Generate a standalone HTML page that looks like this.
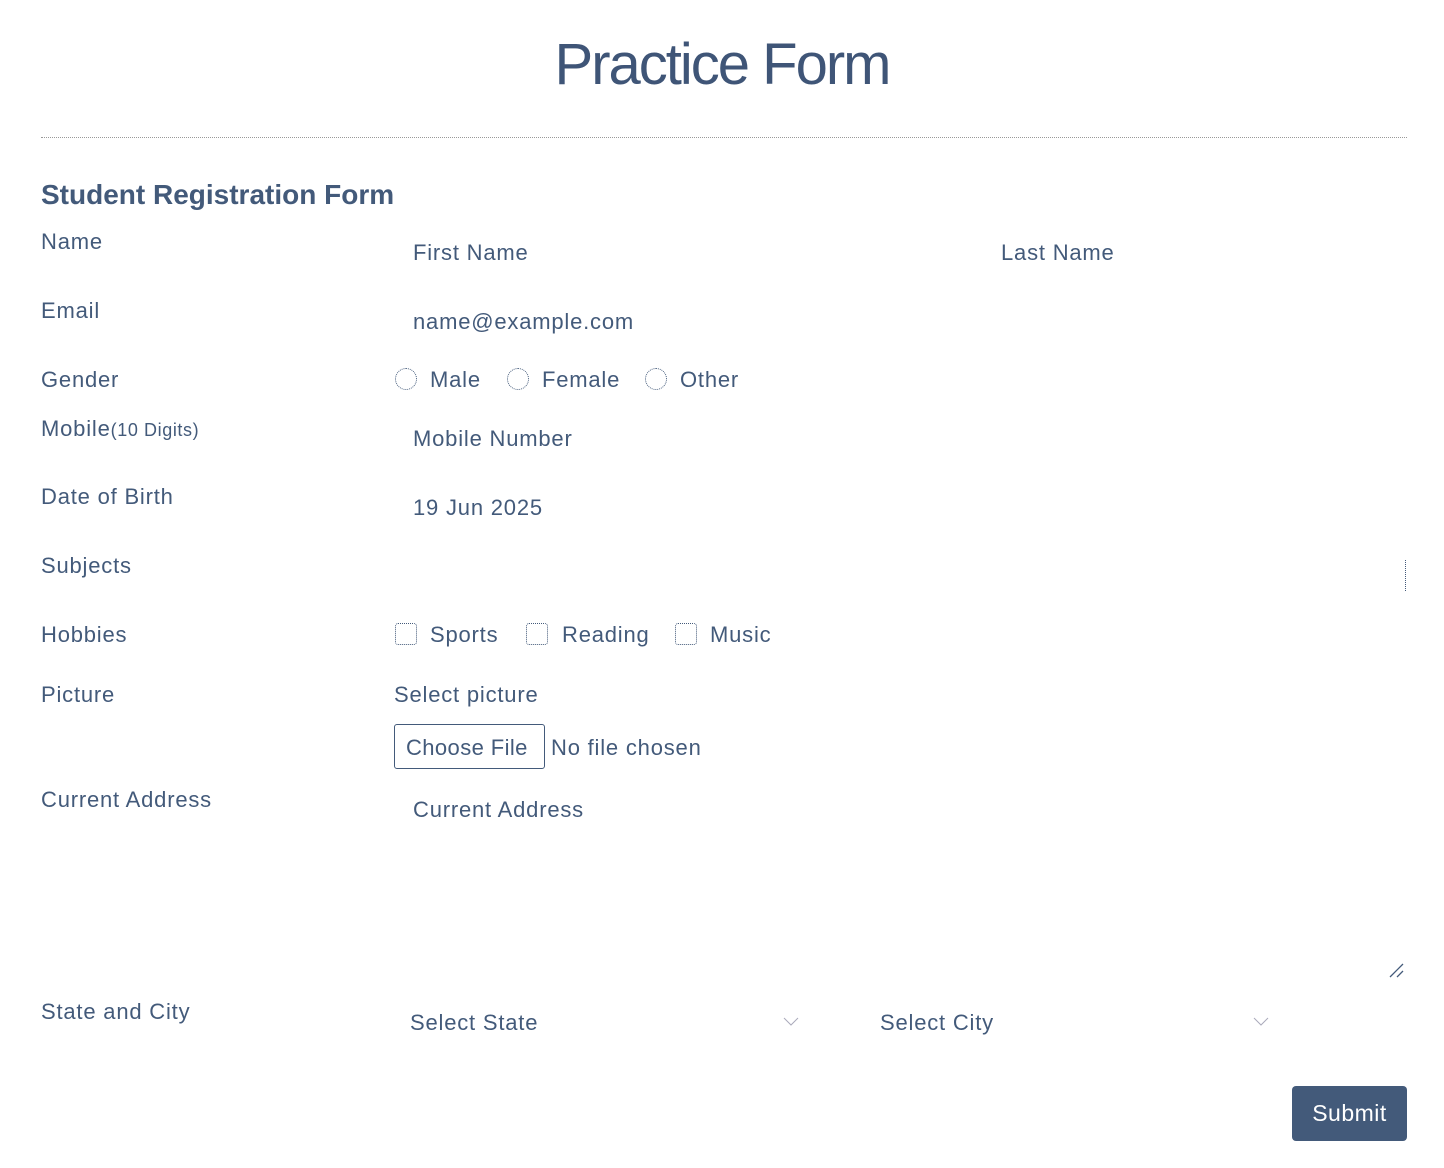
<!DOCTYPE html>
<html><head><meta charset="utf-8"><style>
body{margin:0;width:1444px;height:1168px;background:#fff;font-family:"Liberation Sans",Arial,sans-serif;color:#435a7a;position:relative;overflow:hidden}
.a{position:absolute;white-space:nowrap;font-size:22px;line-height:26px;letter-spacing:0.8px}
.rad{position:absolute;width:22px;height:22px;border:1px dotted #435a7a;border-radius:50%;box-sizing:border-box}
.chk{position:absolute;width:22px;height:22px;border:1px dotted #435a7a;border-radius:3px;box-sizing:border-box}
</style></head><body>
<div class="a" style="left:0;width:1444px;text-align:center;top:30px;font-size:58px;line-height:70px;font-weight:300;letter-spacing:-2px;color:#3f5577">Practice Form</div>
<div style="position:absolute;left:41px;width:1366px;top:137px;border-top:1px dotted #999"></div>
<div class="a" style="left:41px;top:180px;font-size:28px;line-height:30px;font-weight:bold;letter-spacing:0px">Student Registration Form</div>

<div class="a" style="left:41px;top:229px">Name</div>
<div class="a" style="left:413px;top:240px">First Name</div>
<div class="a" style="left:1001px;top:240px">Last Name</div>

<div class="a" style="left:41px;top:298px">Email</div>
<div class="a" style="left:413px;top:309px">name@example.com</div>

<div class="a" style="left:41px;top:367px">Gender</div>
<div class="rad" style="left:395px;top:368px"></div><div class="a" style="left:430px;top:367px">Male</div>
<div class="rad" style="left:507px;top:368px"></div><div class="a" style="left:542px;top:367px">Female</div>
<div class="rad" style="left:645px;top:368px"></div><div class="a" style="left:680px;top:367px">Other</div>

<div class="a" style="left:41px;top:416px">Mobile<span style="font-size:18px;letter-spacing:0.6px">(10 Digits)</span></div>
<div class="a" style="left:413px;top:426px">Mobile Number</div>

<div class="a" style="left:41px;top:484px">Date of Birth</div>
<div class="a" style="left:413px;top:495px">19 Jun 2025</div>

<div class="a" style="left:41px;top:553px">Subjects</div>
<div style="position:absolute;left:1405px;top:560px;height:31px;border-left:1px dotted #435a7a"></div>

<div class="a" style="left:41px;top:622px">Hobbies</div>
<div class="chk" style="left:395px;top:623px"></div><div class="a" style="left:430px;top:622px">Sports</div>
<div class="chk" style="left:526px;top:623px"></div><div class="a" style="left:562px;top:622px">Reading</div>
<div class="chk" style="left:675px;top:623px"></div><div class="a" style="left:710px;top:622px">Music</div>

<div class="a" style="left:41px;top:682px">Picture</div>
<div class="a" style="left:394px;top:682px">Select picture</div>
<div style="position:absolute;left:394px;top:724px;width:151px;height:45px;box-sizing:border-box;border:1px solid #435a7a;border-radius:3px"></div>
<div class="a" style="left:406px;top:735px;letter-spacing:0.4px">Choose File</div>
<div class="a" style="left:551px;top:735px">No file chosen</div>

<div class="a" style="left:41px;top:787px">Current Address</div>
<div class="a" style="left:413px;top:797px">Current Address</div>
<svg style="position:absolute;left:1388px;top:962px" width="18" height="16"><path d="M2 15L15 2M9 15L15 9" stroke="#435a7a" stroke-width="1.3"/></svg>

<div class="a" style="left:41px;top:999px">State and City</div>
<div class="a" style="left:410px;top:1010px">Select State</div>
<svg style="position:absolute;left:783px;top:1017px" width="16" height="10"><path d="M1 1L8 8L15 1" stroke="#aab" fill="none" stroke-width="1"/></svg>
<div class="a" style="left:880px;top:1010px">Select City</div>
<svg style="position:absolute;left:1253px;top:1017px" width="16" height="10"><path d="M1 1L8 8L15 1" stroke="#aab" fill="none" stroke-width="1"/></svg>

<div style="position:absolute;left:1292px;top:1086px;width:115px;height:55px;background:#435a7a;border-radius:4px;color:#fff;font-size:23px;line-height:55px;text-align:center;letter-spacing:0.5px">Submit</div>
</body></html>
